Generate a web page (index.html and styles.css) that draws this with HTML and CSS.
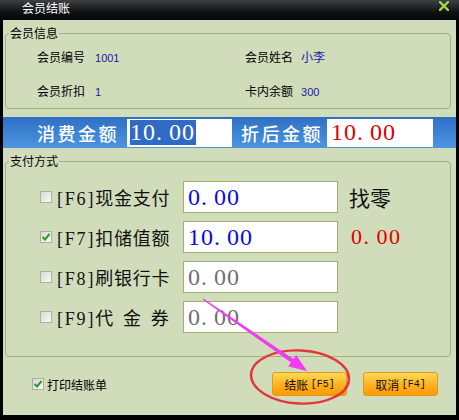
FILE: index.html
```html
<!DOCTYPE html>
<html>
<head>
<meta charset="utf-8">
<link rel="stylesheet" href="styles.css">
</head>
<body>
<div class="window">
  <div class="titlebar">
    <span class="title">会员结账</span>
    <svg class="close" width="10" height="10" viewBox="0 0 10 10"><path d="M1 1L9 9M9 1L1 9" stroke="#a6d64a" stroke-width="2.4" stroke-linecap="square"/></svg>
  </div>
  <div class="client">
    <fieldset class="group info">
      <legend>会员信息</legend>
      <div class="info-grid">
        <div class="field"><span class="lbl">会员编号</span><span class="val num">1001</span></div>
        <div class="field f2"><span class="lbl">会员姓名</span><span class="val">小李</span></div>
        <div class="field"><span class="lbl">会员折扣</span><span class="val num">1</span></div>
        <div class="field f2"><span class="lbl">卡内余额</span><span class="val num">300</span></div>
      </div>
    </fieldset>

    <div class="amountbar">
      <span class="bar-lbl">消费金额</span>
      <div class="bar-input first"><span class="sel">10<span class="dot">.</span>00</span></div>
      <span class="bar-lbl second">折后金额</span>
      <div class="bar-input red">10<span class="dot">.</span>00</div>
    </div>

    <fieldset class="group pay">
      <legend>支付方式</legend>
      <div class="pay-row">
        <span class="cb"></span>
        <span class="pay-lbl"><span class="key">[F6]</span>现金支付</span>
        <div class="pay-input blue">0<span class="dot">.</span>00</div>
        <span class="side change">找零</span>
      </div>
      <div class="pay-row">
        <span class="cb checked"><svg width="10" height="10" viewBox="0 0 10 10"><path d="M1.5 5L4 7.5L8.5 2" fill="none" stroke="#2a9a2a" stroke-width="2"/></svg></span>
        <span class="pay-lbl"><span class="key">[F7]</span>扣储值额</span>
        <div class="pay-input blue">10<span class="dot">.</span>00</div>
        <span class="side redval">0<span class="dot">.</span>00</span>
      </div>
      <div class="pay-row">
        <span class="cb"></span>
        <span class="pay-lbl"><span class="key">[F8]</span>刷银行卡</span>
        <div class="pay-input gray">0<span class="dot">.</span>00</div>
      </div>
      <div class="pay-row">
        <span class="cb"></span>
        <span class="pay-lbl"><span class="key">[F9]</span>代<span class="sp"> </span>金<span class="sp"> </span>券</span>
        <div class="pay-input gray">0<span class="dot">.</span>00</div>
      </div>
    </fieldset>

    <div class="footer">
      <span class="cb small checked"><svg width="10" height="10" viewBox="0 0 10 10"><path d="M1.5 5L4 7.5L8.5 2" fill="none" stroke="#2a9a2a" stroke-width="2"/></svg></span>
      <span class="print-lbl">打印结账单</span>
      <div class="buttons">
        <div class="btn">结账 <span class="bkey">[F5]</span></div>
        <div class="btn">取消 <span class="bkey">[F4]</span></div>
      </div>
    </div>
  </div>

  <svg class="annot" width="459" height="420" viewBox="0 0 459 420">
    <ellipse cx="300" cy="377" rx="49" ry="26.5" fill="none" stroke="#e2363a" stroke-width="2.4" transform="rotate(3 300 377)"/>
    <polygon points="202.6,299.5 203.4,298.5 293.4,359.0 296.2,355.0 307,371 288.2,366.6 291.0,362.6" fill="#f03cf0"/>
  </svg>
</div>
</body>
</html>
```

FILE: styles.css
```css
* { box-sizing: border-box; }
html, body { margin: 0; padding: 0; background: #000; }
body { font-family: "Noto Sans CJK SC", "Liberation Sans", sans-serif; }

.window {
  position: relative;
  width: 459px;
  height: 420px;
  background: #000;
  display: flex;
  flex-direction: column;
  overflow: hidden;
}

.titlebar {
  height: 20px;
  flex: none;
  display: flex;
  align-items: flex-start;
  padding-left: 22px;
  background: linear-gradient(#3c4044, #101214 60%, #050607);
}
.title {
  color: #fff;
  font-size: 12px;
  line-height: 15px;
}
.close {
  margin-left: auto;
  margin-right: 10px;
  margin-top: 1px;
}

.client {
  flex: 1;
  margin: 0 3px 5px 3px;
  background: #d1dcbb;
  display: flex;
  flex-direction: column;
}

.group {
  border: 1px solid #a2b27a;
  border-radius: 4px;
  margin: 0 5px 0 2px;
  padding: 0 0 0 3px;
  min-width: 0;
}
.group legend {
  font-size: 12px;
  line-height: 14px;
  padding: 0 1px;
  color: #000;
}

.info { margin-top: 6px; padding-bottom: 9px; }
.info-grid {
  margin: 10px 0 0 28px;
  display: grid;
  grid-template-columns: 208px auto;
  row-gap: 19px;
  font-size: 12px;
  line-height: 14px;
}
.field { display: flex; align-items: baseline; gap: 10px; }
.field.f2 { gap: 8px; }
.val { color: #1a1aa6; }
.val.num { font-family: "Liberation Sans", sans-serif; font-size: 11px; }

.amountbar {
  margin-top: 8px;
  height: 31px;
  flex: none;
  display: flex;
  align-items: center;
  padding-left: 34px;
  background: linear-gradient(#2f70c4, #3f86d6 60%, #4f94de);
}
.bar-lbl {
  color: #fff;
  font-size: 18px;
  font-weight: 500;
  letter-spacing: 2.5px;
  line-height: 24px;
  margin-right: 8px;
}
.bar-lbl.second { margin-left: 9px; margin-right: 4px; }

/* half-width serif digits, SimSun-like */
.bar-input, .pay-input, .redval {
  font-family: "Liberation Serif", serif;
  letter-spacing: 1px;
}
.dot { margin-right: 6px; }

.bar-input {
  height: 28px;
  background: #fff;
  display: flex;
  align-items: center;
  font-size: 24px;
  line-height: 25px;
}
.bar-input.first { width: 105px; padding-left: 3px; }
.bar-input.red { width: 106px; padding-left: 4px; color: #e00000; }
.sel { background: #316ac5; color: #fff; padding-right: 1px; }

.pay { margin-top: 6px; padding-bottom: 23px; }
.pay-row {
  display: flex;
  align-items: center;
  height: 32px;
  margin-left: 31px;
}
.pay legend + .pay-row { margin-top: 13px; }
.pay-row + .pay-row { margin-top: 8px; }

.cb {
  width: 12px;
  height: 12px;
  flex: none;
  border: 1px solid #a8b0a4;
  background: linear-gradient(135deg, #d6d8ce, #fbfbf8);
  display: flex;
  align-items: center;
  justify-content: center;
}
.pay-lbl {
  width: 126px;
  margin-left: 5px;
  font-family: "Liberation Serif", "Noto Sans CJK SC", serif;
  font-size: 18px;
  letter-spacing: 0.8px;
  color: #111;
  white-space: nowrap;
}
.key { letter-spacing: 1.8px; }
.sp { display: inline-block; width: 9px; }
.pay-input {
  width: 155px;
  height: 32px;
  border: 1px solid #a3ad74;
  background: #fff;
  display: flex;
  align-items: center;
  padding-left: 4px;
  font-size: 24px;
}
.pay-input.blue { color: #0a0ae6; }
.pay-input.gray { color: #707070; }
.side { margin-left: 11px; }
.change { font-size: 21px; color: #111; }
.redval {
  margin-left: 13px;
  font-size: 22px;
  letter-spacing: 1.5px;
  color: #e00000;
}

.footer {
  margin-top: 15px;
  height: 24px;
  display: flex;
  align-items: center;
  padding: 0 18px 0 29px;
}
.cb.small { width: 12px; height: 12px; }
.print-lbl { margin-left: 3px; font-size: 12px; }
.buttons { margin-left: auto; display: flex; gap: 16px; }
.btn {
  width: 75px;
  height: 24px;
  border: 1px solid #e39a22;
  border-radius: 3px;
  background: linear-gradient(#ffd955, #ffb020 55%, #ff9a00);
  display: flex;
  align-items: center;
  justify-content: center;
  font-size: 12px;
  color: #111;
  white-space: pre;
}
.bkey { font-family: "Liberation Mono", monospace; font-size: 10px; }

.annot {
  position: absolute;
  left: 0;
  top: 0;
  pointer-events: none;
}
```
